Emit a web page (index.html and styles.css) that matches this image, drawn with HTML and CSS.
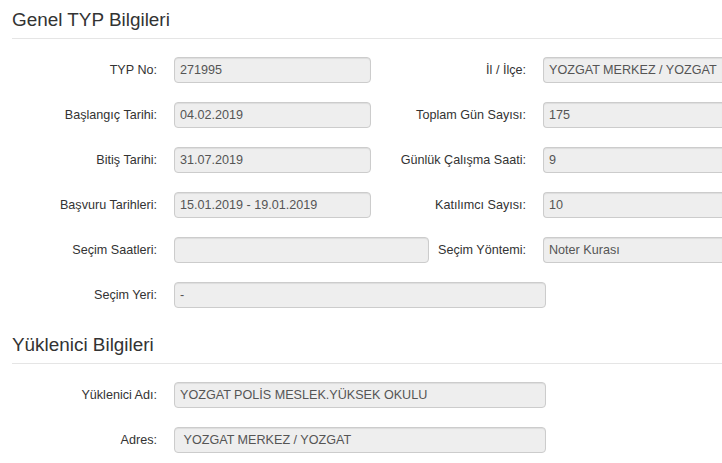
FILE: index.html
```html
<!DOCTYPE html>
<html lang="tr">
<head>
    <meta charset="UTF-8">
    <meta name="viewport" content="width=device-width, initial-scale=1.0">
    <title>TYP Bilgileri</title>
    <link rel="stylesheet" href="styles.css">
</head>
<body>

    <!-- Genel TYP Bilgileri -->
    <div class="section">
        <h3 class="section-title">Genel TYP Bilgileri</h3>

        <div class="form-grid">
            <label class="field-label">TYP No:</label>
            <div class="field-value">271995</div>
            <label class="field-label">İl / İlçe:</label>
            <div class="field-value wide">YOZGAT MERKEZ / YOZGAT</div>

            <label class="field-label">Başlangıç Tarihi:</label>
            <div class="field-value">04.02.2019</div>
            <label class="field-label">Toplam Gün Sayısı:</label>
            <div class="field-value wide">175</div>

            <label class="field-label">Bitiş Tarihi:</label>
            <div class="field-value">31.07.2019</div>
            <label class="field-label">Günlük Çalışma Saati:</label>
            <div class="field-value wide">9</div>

            <label class="field-label">Başvuru Tarihleri:</label>
            <div class="field-value">15.01.2019 - 19.01.2019</div>
            <label class="field-label">Katılımcı Sayısı:</label>
            <div class="field-value wide">10</div>

            <label class="field-label">Seçim Saatleri:</label>
            <div class="field-value medium"></div>
            <label class="field-label">Seçim Yöntemi:</label>
            <div class="field-value wide">Noter Kurası</div>

            <label class="field-label">Seçim Yeri:</label>
            <div class="field-value long">-</div>
        </div>
    </div>

    <!-- Yüklenici Bilgileri -->
    <div class="section">
        <h3 class="section-title">Yüklenici Bilgileri</h3>

        <div class="form-grid">
            <label class="field-label">Yüklenici Adı:</label>
            <div class="field-value long">YOZGAT POLİS MESLEK.YÜKSEK OKULU</div>

            <label class="field-label">Adres:</label>
            <div class="field-value long">&nbsp;YOZGAT MERKEZ / YOZGAT</div>
        </div>
    </div>

</body>
</html>
```

FILE: styles.css
```css
html, body {
    overflow: hidden;
}
body {
    font-family: "Liberation Sans", Arial, sans-serif;
    font-size: 12.6px;
    color: #333;
    background-color: #fff;
    margin: 0;
    width: 722px;
}
.section + .section {
    margin-top: 17px;
}
.section-title {
    font-size: 18.9px;
    font-weight: normal;
    line-height: 22px;
    margin: 0 0 18px 12px;
    padding: 9px 0 7px;
    border-bottom: 1px solid #e5e5e5;
}
.form-grid {
    display: grid;
    grid-template-columns: 157px 197px 138px 179px;
    grid-auto-rows: 26px;
    column-gap: 17px;
    row-gap: 19px;
    align-items: center;
}
.field-label {
    text-align: right;
    white-space: nowrap;
}
.field-value {
    box-sizing: border-box;
    height: 26px;
    line-height: 24px;
    padding: 0 5px;
    color: #555;
    background-color: #eee;
    border: 1px solid #ccc;
    border-radius: 4px;
    box-shadow: inset 0 1px 1px rgba(0, 0, 0, 0.075);
    white-space: nowrap;
    overflow: hidden;
    width: 197px;
}
.field-value.medium {
    width: 255px;
}
.field-value.long {
    grid-column: 2 / span 3;
    width: 372px;
}
.field-value.wide {
    width: 179px;
    border-right: none;
    border-radius: 4px 0 0 4px;
}
```
